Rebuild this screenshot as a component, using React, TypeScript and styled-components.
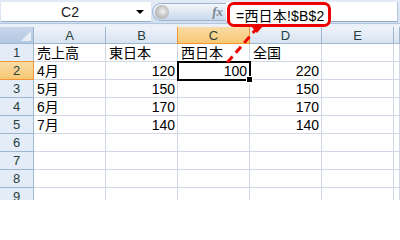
import React from "react";
import styled, { createGlobalStyle, css } from "styled-components";

const GlobalStyle = createGlobalStyle`
  html, body {
    margin: 0;
    padding: 0;
    background: #ffffff;
  }
  * {
    box-sizing: border-box;
  }
`;

const cellFont = `"Liberation Sans", "Noto Sans CJK JP", sans-serif`;

const Screen = styled.div`
  position: relative;
  width: 400px;
  height: 200px;
  overflow: hidden;
  font-family: ${cellFont};
  background: #ffffff;
`;

const FormulaBar = styled.div`
  display: flex;
  align-items: center;
  height: 23px;
  padding: 2px 2px 1px 1px;
  background: linear-gradient(#e3ebf6, #d3e0f0);
`;

const NameBox = styled.div`
  position: relative;
  display: flex;
  align-items: center;
  justify-content: center;
  width: 150px;
  height: 20px;
  background: #ffffff;
  border-bottom: 1px solid #8fa9cc;
  font-size: 14px;
  color: #1a1a1a;
  padding-right: 12px;
`;

const DropArrow = styled.span`
  position: absolute;
  right: 7px;
  top: 8px;
  width: 0;
  height: 0;
  border-left: 4px solid transparent;
  border-right: 4px solid transparent;
  border-top: 4px solid #000;
`;

const Pill = styled.div`
  display: flex;
  align-items: center;
  width: 74px;
  height: 18px;
  margin-left: 1px;
  border: 1px solid #9db4d3;
  border-right: none;
  border-radius: 9px 0 0 9px;
  background: linear-gradient(#f4f8fc, #c9d8ec);
`;

const Knob = styled.span`
  width: 14px;
  height: 14px;
  margin-left: 2px;
  border-radius: 50%;
  background: radial-gradient(circle at 55% 45%, #f4f4f4 0%, #c8c8c8 45%, #9a9a9a 100%);
`;

const Fx = styled.span`
  margin-left: auto;
  margin-right: 3px;
  font-family: "Liberation Serif", serif;
  font-style: italic;
  font-weight: bold;
  font-size: 13px;
  color: #7a8694;
`;

const FormulaInput = styled.div`
  flex: 1;
  height: 20px;
  background: #ffffff;
  border-bottom: 1px solid #8fa9cc;
  border-right: 1px solid #b4c6de;
`;

const Strip = styled.div`
  height: 4px;
  background: #eaf0f8;
  border-top: 1px solid #b4c6de;
`;

const Grid = styled.div`
  display: grid;
  grid-template-columns: 34px repeat(5, 72px) 1fr;
  grid-template-rows: 17px;
  grid-auto-rows: 18px;
`;

const Corner = styled.div`
  position: relative;
  background: linear-gradient(#c6d6ea, #b3c8e3);
  border-right: 1px solid #9eb6ce;
  border-bottom: 1px solid #9eb6ce;
  &::after {
    content: "";
    position: absolute;
    right: 2px;
    bottom: 2px;
    width: 0;
    height: 0;
    border-left: 10px solid transparent;
    border-bottom: 10px solid #e6edf7;
  }
`;

const ColHead = styled.div<{ $active?: boolean }>`
  display: flex;
  align-items: center;
  justify-content: center;
  font-size: 13px;
  color: #27413e;
  background: linear-gradient(#eef3fa, #d8e3f1);
  border-right: 1px solid #9eb6ce;
  border-bottom: 1px solid #9eb6ce;
  ${(p) =>
    p.$active &&
    css`
      background: linear-gradient(#f9dba4, #f6c874);
      border-left: 1px solid #f29536;
      border-right: 1px solid #f29536;
      border-bottom: 1px solid #f29536;
      margin-left: -1px;
    `}
`;

const RowHead = styled.div<{ $active?: boolean }>`
  display: flex;
  align-items: center;
  justify-content: center;
  font-size: 13px;
  color: #27413e;
  background: #e4ecf7;
  border-right: 1px solid #9eb6ce;
  border-bottom: 1px solid #9eb6ce;
  ${(p) =>
    p.$active &&
    css`
      background: linear-gradient(#f9dba4, #f6c874);
      border-right: 1px solid #f29536;
      border-bottom: 1px solid #f29536;
      border-top: 1px solid #f29536;
      margin-top: -1px;
    `}
`;

const Cell = styled.div<{ $num?: boolean; $selected?: boolean }>`
  position: relative;
  display: flex;
  align-items: flex-end;
  justify-content: ${(p) => (p.$num ? "flex-end" : "flex-start")};
  padding: 0 2px 0 3px;
  font-size: 14px;
  line-height: 16px;
  color: #000;
  white-space: nowrap;
  border-right: 1px solid #d0d7e5;
  border-bottom: 1px solid #d0d7e5;
  ${(p) =>
    p.$selected &&
    css`
      outline: 2px solid #000;
      outline-offset: -1px;
      z-index: 1;
      &::after {
        content: "";
        position: absolute;
        right: -4px;
        bottom: -4px;
        width: 5px;
        height: 5px;
        background: #000;
        border: 1px solid #fff;
      }
    `}
`;

const Callout = styled.div`
  position: absolute;
  left: 227px;
  top: 2px;
  width: 104px;
  height: 25px;
  display: flex;
  align-items: center;
  padding-left: 6px;
  background: #ffffff;
  border: 3px solid #ee0000;
  border-radius: 7px;
  font-family: ${cellFont};
  font-size: 14px;
  letter-spacing: 0.2px;
  color: #000;
  z-index: 3;
`;

const Leader = styled.svg`
  position: absolute;
  left: 0;
  top: 0;
  z-index: 4;
  pointer-events: none;
`;

const columns = ["A", "B", "C", "D", "E"];

type Row = (string | number)[];

const rows: Row[] = [
  ["売上高", "東日本", "西日本", "全国", ""],
  ["4月", 120, 100, 220, ""],
  ["5月", 150, "", 150, ""],
  ["6月", 170, "", 170, ""],
  ["7月", 140, "", 140, ""],
  ["", "", "", "", ""],
  ["", "", "", "", ""],
  ["", "", "", "", ""],
  ["", "", "", "", ""],
];

const App: React.FC = () => {
  return (
    <>
      <GlobalStyle />
      <Screen>
        <FormulaBar>
          <NameBox>
            C2
            <DropArrow />
          </NameBox>
          <Pill>
            <Knob />
            <Fx>fx</Fx>
          </Pill>
          <FormulaInput />
        </FormulaBar>
        <Strip />
        <Grid>
          <Corner />
          {columns.map((c) => (
            <ColHead key={c} $active={c === "C"}>
              {c}
            </ColHead>
          ))}
          <ColHead />
          {rows.map((row, r) => (
            <React.Fragment key={r}>
              <RowHead $active={r === 1}>{r + 1}</RowHead>
              {row.map((v, c) => (
                <Cell
                  key={c}
                  $num={typeof v === "number"}
                  $selected={r === 1 && c === 2}
                >
                  {v}
                </Cell>
              ))}
              <Cell />
            </React.Fragment>
          ))}
        </Grid>
        <Callout>=西日本!$B$2</Callout>
        <Leader width="400" height="200" viewBox="0 0 400 200">
          <path d="M251 26 L263 26 L257 33 Z" fill="#ee0000" />
          <line
            x1="258"
            y1="27"
            x2="226"
            y2="64"
            stroke="#ee0000"
            strokeWidth="3"
            strokeDasharray="8 5"
          />
        </Leader>
      </Screen>
    </>
  );
};

export default App;
